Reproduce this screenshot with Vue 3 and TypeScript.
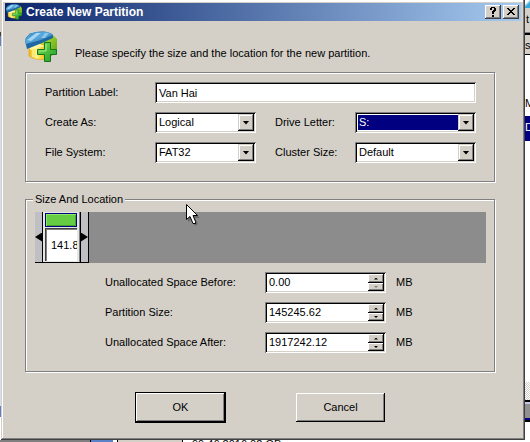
<script setup lang="ts">
import { ref } from 'vue'

interface SizeField {
  id: string
  label: string
  value: string
  atMinimum: boolean
}

const partitionLabel = ref('Van Hai')
const createAs = ref('Logical')
const driveLetter = ref('S:')
const fileSystem = ref('FAT32')
const clusterSize = ref('Default')

const sizes = ref<SizeField[]>([
  { id: 'before', label: 'Unallocated Space Before:', value: '0.00', atMinimum: true },
  { id: 'size', label: 'Partition Size:', value: '145245.62', atMinimum: false },
  { id: 'after', label: 'Unallocated Space After:', value: '1917242.12', atMinimum: false },
])

function step(field: SizeField, amount: number) {
  field.value = Math.max(0, Number(field.value) + amount).toFixed(2)
}
</script>

<template>
  <div class="desktop">
    <svg width="0" height="0" class="defs" aria-hidden="true">
      <defs>
        <linearGradient id="blue" x1="0" y1="0" x2="1" y2="1">
          <stop offset="0" stop-color="#2f86c4" />
          <stop offset="0.45" stop-color="#5aa9dc" />
          <stop offset="1" stop-color="#1c5f9c" />
        </linearGradient>
        <linearGradient id="yellow" x1="0" y1="0" x2="1" y2="0">
          <stop offset="0" stop-color="#f2b50c" />
          <stop offset="0.4" stop-color="#fff27a" />
          <stop offset="1" stop-color="#f0c010" />
        </linearGradient>
        <linearGradient id="green" x1="0" y1="0" x2="1" y2="1">
          <stop offset="0" stop-color="#c9ec3c" />
          <stop offset="1" stop-color="#4f9c12" />
        </linearGradient>
        <linearGradient id="plus" x1="0" y1="0" x2="1" y2="1">
          <stop offset="0" stop-color="#7be05a" />
          <stop offset="1" stop-color="#1f9a24" />
        </linearGradient>
        <symbol id="disk" viewBox="0 0 32 32">
          <path d="M14 9 28 4 32 8V20Q28 25 20 28L14 17Z" fill="url(#green)" />
          <path d="M4 16 14 12 21 15V28Q11 30 4 25Z" fill="url(#yellow)" stroke="#e0a010" stroke-width="0.6" />
          <path d="M4 17 14 13 20 15 6 19Z" fill="#fff6a0" />
          <path d="M8 19V26M12 18V27" stroke="#fff8b8" />
          <path d="M0 10Q1 3 11 1 23 -1 28 4V7L17 12 2 18Z" fill="#1d67a5" />
          <path d="M0 10Q1 3 11 1 23 -1 28 4L16 9 1 13Z" fill="url(#blue)" />
          <path d="M2 9 11 2 16 2 6 10Z" fill="#a5d5f2" />
          <path d="M16 7 20 2 24 2 20 7Z" fill="#8ac6ec" />
          <path d="M19.500 11.500H25.500V18.500H31.500V23.500H25.500V30.500H19.500V23.500H12.500V18.500H19.500Z" fill="url(#plus)" stroke="#15761c" />
          <path d="M21 13V20H14" fill="none" stroke="#a5f08a" />
        </symbol>
      </defs>
    </svg>

    <div class="behind-left" aria-hidden="true">
      <i class="l1"></i><i class="l2"></i><i class="l3"></i><i class="l4"></i><i class="l5"></i><i class="l6"></i>
    </div>

    <main class="dialog" role="dialog" aria-labelledby="caption">
      <header class="titlebar">
        <svg class="small-icon" viewBox="0 0 32 32"><use href="#disk" /></svg>
        <h1 id="caption">Create New Partition</h1>
        <div class="window-buttons">
          <button type="button" aria-label="Help">
            <svg viewBox="0 0 12 10" shape-rendering="crispEdges"><path d="M3 1H4V0H8V1H9V4H8V5H7V7H5V4H6V3H7V1H5V3H3ZM5 8H7V10H5Z" /></svg>
          </button>
          <button type="button" aria-label="Close">
            <svg viewBox="0 0 12 10" shape-rendering="crispEdges"><path d="M2 1H4V2H5V3H7V2H8V1H10V2H9V3H8V4H7V5H8V6H9V7H10V8H8V7H7V6H5V7H4V8H2V7H3V6H4V5H5V4H4V3H3V2H2Z" /></svg>
          </button>
        </div>
      </header>

      <form class="content" @submit.prevent>
        <div class="intro">
          <svg class="big-icon" viewBox="0 0 32 32"><use href="#disk" /></svg>
          <p>Please specify the size and the location for the new partition.</p>
        </div>

        <section class="options">
          <label for="label">Partition Label:</label>
          <input id="label" v-model="partitionLabel" class="field wide" type="text" />

          <label for="create">Create As:</label>
          <div class="combo first">
            <select id="create" v-model="createAs" class="field"><option>Logical</option><option>Primary</option></select>
            <span class="drop"></span>
          </div>
          <label for="letter">Drive Letter:</label>
          <div class="combo selected">
            <select id="letter" v-model="driveLetter" class="field"><option>S:</option><option>T:</option></select>
            <span class="drop"></span>
          </div>

          <label for="fs">File System:</label>
          <div class="combo first">
            <select id="fs" v-model="fileSystem" class="field"><option>FAT32</option><option>NTFS</option></select>
            <span class="drop"></span>
          </div>
          <label for="cluster">Cluster Size:</label>
          <div class="combo">
            <select id="cluster" v-model="clusterSize" class="field"><option>Default</option></select>
            <span class="drop"></span>
          </div>
        </section>

        <fieldset class="location">
          <legend>Size And Location</legend>
          <div class="disk-map">
            <span class="handle left"></span>
            <div class="partition">
              <span class="fill"></span>
              <span class="amount">141.8</span>
            </div>
            <span class="handle right"></span>
            <svg class="pointer" viewBox="0 0 16 24" aria-hidden="true">
              <path d="M2 3V18L6 15 9 22 12 20 9 14H14Z" fill="#000" opacity="0.25" />
              <path d="M0.500 0.500V15.500L4 12.500 7 19.500H9.500V17.500L7 11.500H11.500Z" fill="#fff" stroke="#000" />
            </svg>
          </div>
          <div class="sizes">
            <div v-for="field in sizes" :key="field.id" class="size-row">
              <label :for="field.id">{{ field.label }}</label>
              <div class="field spin">
                <input :id="field.id" v-model="field.value" type="text" />
                <div class="steps">
                  <button type="button" aria-label="Increase" @click="step(field, 1)"><i class="up"></i></button>
                  <button type="button" aria-label="Decrease" :disabled="field.atMinimum" @click="step(field, -1)"><i class="down"></i></button>
                </div>
              </div>
              <span>MB</span>
            </div>
          </div>
        </fieldset>

        <footer class="actions">
          <button type="submit" class="push default">OK</button>
          <button type="button" class="push">Cancel</button>
        </footer>
      </form>
    </main>

    <div class="behind-right" aria-hidden="true">
      <i class="r-icon"></i><span class="r-tool">t</span><span class="r-head">se</span>
      <span class="r-row">M</span><span class="r-selected">D</span><i class="r-blank"></i><i class="r-check"></i><i class="r-bar"></i><i class="r-end"></i>
    </div>

    <div class="behind-bottom" aria-hidden="true">
      <i class="b-dark"></i><i class="b-blue"></i><i class="b-line"></i><i class="b-face"></i><i class="b-line"></i><span>99.46 2016.02 GB</span>
    </div>
  </div>
</template>

<style>
body {
  margin: 0;
  background: #fff;
}
</style>

<style scoped>
* {
  box-sizing: border-box;
}
.desktop {
  display: grid;
  grid-template-columns: 1px 1fr 5px;
  grid-template-rows: auto 2px;
  overflow: hidden;
  color: #000;
  font: 11px/15px "Liberation Sans", Arial, sans-serif;
}
.defs {
  position: absolute;
}
button,
input,
select {
  font: inherit;
  color: inherit;
  margin: 0;
  padding: 0;
  border: 0;
  border-radius: 0;
  outline: 0;
}
.dialog {
  min-width: 0;
  background: #d4d0c8;
  padding: 3px 4px 4px;
  box-shadow: inset -1px -1px #404040, inset 1px 0 #d4d0c8, inset -2px -2px #808080, inset 2px 2px #fff;
}
.titlebar {
  display: flex;
  align-items: center;
  height: 18px;
  padding: 0 2px 0 1px;
  color: #fff;
  background: linear-gradient(90deg, #0a246a, #a6caf0);
}
.small-icon {
  width: 16px;
  height: 16px;
}
h1 {
  flex: 1;
  margin: 0 0 0 4px;
  font: bold 12px/16px "Liberation Sans", sans-serif;
}
.window-buttons {
  display: flex;
  gap: 2px;
}
.window-buttons button {
  width: 16px;
  height: 14px;
  display: grid;
  place-items: center;
  background: #d4d0c8;
  box-shadow: inset -1px -1px #404040, inset 1px 1px #fff, inset -2px -2px #808080;
}
.window-buttons svg {
  width: 12px;
  height: 10px;
  fill: #000;
}
.content {
  display: flex;
  flex-direction: column;
  padding: 10px 26px 13px 20px;
}
.intro {
  display: flex;
  align-items: center;
  gap: 18px;
  height: 41px;
}
.big-icon {
  width: 32px;
  height: 32px;
  align-self: flex-start;
}
.intro p {
  margin: 4px 0 0;
}
.options {
  display: grid;
  grid-template-columns: 110px 1fr 80px 121px;
  gap: 9px 0;
  align-items: center;
  padding: 9px 18px 18px 19px;
  border: 1px solid #808080;
  box-shadow: 1px 1px #fff, inset 1px 1px #fff;
}
.wide {
  grid-column: span 3;
}
.field {
  display: block;
  width: 100%;
  height: 21px;
  padding: 1px 4px;
  background: #fff;
  box-shadow: inset 1px 1px #808080, inset -1px -1px #fff, inset 2px 2px #000, inset -2px -2px #d4d0c8;
  appearance: none;
}
.combo {
  position: relative;
}
.combo.first {
  margin-right: 19px;
}
.drop {
  position: absolute;
  top: 2px;
  right: 2px;
  width: 16px;
  height: 17px;
  display: grid;
  place-items: center;
  background: #d4d0c8;
  box-shadow: inset -1px -1px #000, inset 1px 1px #d4d0c8, inset -2px -2px #808080, inset 2px 2px #fff;
  pointer-events: none;
}
.drop::before {
  content: "";
  width: 7px;
  height: 4px;
  background: #000;
  clip-path: polygon(0 0, 100% 0, 50% 100%);
}
.selected select {
  color: #fff;
  background: #000080;
  box-shadow: inset 1px 1px #808080, inset -1px -1px #fff, inset 2px 2px #000, inset -2px -2px #d4d0c8, inset 3px 3px #fff, inset -3px -3px #fff;
}
.location {
  position: relative;
  min-width: 0;
  margin: 10px 0 0;
  padding: 5px 9px 19px;
  border: 0;
}
.location::before {
  content: "";
  position: absolute;
  inset: -8px 0 0;
  border: 1px solid #808080;
  box-shadow: 1px 1px #fff, inset 1px 1px #fff;
  pointer-events: none;
}
legend {
  position: relative;
  z-index: 1;
  margin-left: -1px;
  padding: 0 2px;
  background: #d4d0c8;
}
.disk-map {
  position: relative;
  display: flex;
  height: 51px;
  margin-left: 1px;
  background: #8c8c8c;
}
.handle {
  width: 7px;
  display: flex;
  align-items: center;
  background: #c0c0c4;
  border-bottom: 1px solid #000;
}
.handle::before {
  content: "";
  width: 7px;
  height: 9px;
  background: #000;
  clip-path: polygon(100% 0, 100% 100%, 0 50%);
}
.handle.right {
  width: 8px;
  border-right: 1px solid #000;
}
.handle.right::before {
  clip-path: polygon(0 0, 0 100%, 100% 50%);
}
.partition {
  width: 39px;
  padding: 1px 2px 0;
  background: #e4e8e4;
  border: 1px solid #000;
  border-width: 0 1px 1px;
  box-shadow: inset -1px 0 #808080;
}
.fill {
  display: block;
  width: 32px;
  height: 14px;
  margin-bottom: 1px;
  background: #66cc44;
  border: 1px solid #000080;
  box-shadow: inset 1px 1px #88e868, inset -1px -1px #44a030;
}
.amount {
  display: flex;
  align-items: center;
  width: 32px;
  height: 33px;
  padding-left: 5px;
  overflow: hidden;
  background: #fff;
  border: 1px solid #404040;
  border-width: 1px 0 0 1px;
  box-shadow: inset 1px 1px #808080;
}
.pointer {
  position: absolute;
  left: 151px;
  top: -8px;
  width: 16px;
  height: 24px;
}
.sizes {
  display: grid;
  gap: 9px;
  padding: 9px 0 0 71px;
}
.size-row {
  display: grid;
  grid-template-columns: 160px 121px auto;
  align-items: center;
}
.size-row > span {
  padding-left: 10px;
}
.spin {
  display: flex;
  padding: 2px 2px 2px 4px;
}
.spin input {
  flex: 1;
  min-width: 0;
  background: transparent;
}
.steps {
  width: 16px;
  display: grid;
  grid-template-rows: 9px 8px;
}
.steps button {
  display: grid;
  place-items: center;
  background: #d4d0c8;
  box-shadow: inset -1px -1px #000, inset 1px 1px #fff, inset -2px -2px #808080;
}
.steps i {
  width: 4px;
  height: 2px;
  background: #000;
  clip-path: polygon(0 100%, 50% 0, 100% 100%);
}
.steps .down {
  clip-path: polygon(0 0, 100% 0, 50% 100%);
}
.steps button:disabled i {
  background: #808080;
}
.actions {
  display: flex;
  align-items: center;
  gap: 70px;
  padding: 20px 0 0 110px;
}
.push {
  width: 89px;
  height: 29px;
  background: #d4d0c8;
  box-shadow: inset -1px -1px #000, inset 1px 1px #fff, inset -2px -2px #808080;
}
.push.default {
  width: 91px;
  height: 31px;
  border: 1px solid #000;
}
.behind-left,
.behind-right {
  display: flex;
  flex-direction: column;
  overflow: hidden;
  min-height: 0;
}
.behind-left i {
  flex: none;
}
.l1 { height: 32px; background: #d4d0c8; }
.l2 { height: 4px; background: #404040; }
.l3 { height: 10px; background: #6080c8; }
.l4 { height: 360px; background: #d4e0f6; }
.l5 { height: 11px; background: #5a80c8; }
.l6 { height: 20px; background: #fff; }
.behind-right > * {
  flex: none;
  overflow: hidden;
}
.r-icon { height: 8px; background: linear-gradient(135deg, #fff 30%, #38a8d8 60%); }
.r-tool { height: 25px; padding: 4px 0 0 1px; background: #d4d0c8; border-bottom: 1px solid #808080; }
.r-head { height: 22px; background: #d4d0c8; border: 1px solid #000; border-width: 2px 0 1px; padding-top: 3px; }
.r-row { height: 61px; padding-top: 41px; background: #fff; }
.r-selected { height: 25px; padding-top: 4px; color: #fff; background: #000080; }
.r-blank { height: 241px; background: #fff; }
.r-check { height: 18px; background: repeating-conic-gradient(#d4d0c8 0 25%, #fff 0 50%) 0 0 / 2px 2px; }
.r-bar { height: 22px; background: #909090; border: 2px solid #000; border-width: 2px 0; box-shadow: inset 0 2px #c8c8e8, inset 0 -2px #000080; }
.r-end { height: 18px; background: #fff; }
.behind-bottom {
  grid-column: 1 / -1;
  display: flex;
  height: 2px;
  overflow: hidden;
  background: #fff;
}
.behind-bottom > * {
  flex: none;
}
.b-dark { width: 91px; background: #808080; border-right: 1px solid #000; }
.b-blue { width: 22px; margin-right: 4px; background: #5a82c8; }
.b-line { width: 1px; background: #000; }
.b-face { width: 64px; background: #d4d0c8; }
.behind-bottom span { padding-left: 9px; line-height: 9px; }
</style>
